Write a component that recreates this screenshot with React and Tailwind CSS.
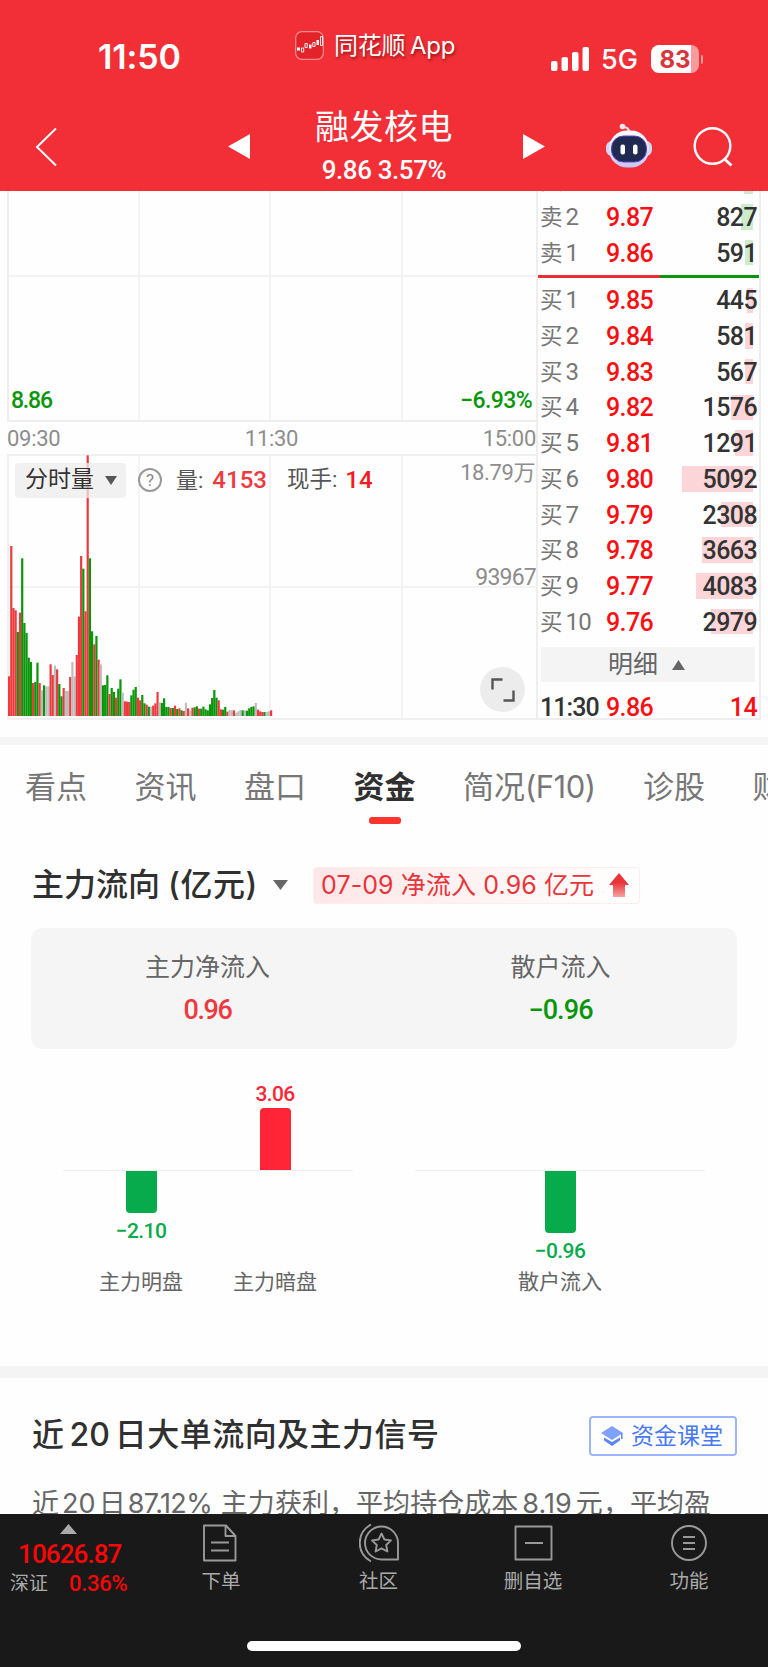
import React from 'react';

// --- Data ---
const SELLS = [
  { label: '卖', level: 3, price: '9.88', volume: 640 },
  { label: '卖', level: 2, price: '9.87', volume: 827 },
  { label: '卖', level: 1, price: '9.86', volume: 591 },
];

const BUYS = [
  { label: '买', level: 1, price: '9.85', volume: 445 },
  { label: '买', level: 2, price: '9.84', volume: 581 },
  { label: '买', level: 3, price: '9.83', volume: 567 },
  { label: '买', level: 4, price: '9.82', volume: 1576 },
  { label: '买', level: 5, price: '9.81', volume: 1291 },
  { label: '买', level: 6, price: '9.80', volume: 5092 },
  { label: '买', level: 7, price: '9.79', volume: 2308 },
  { label: '买', level: 8, price: '9.78', volume: 3663 },
  { label: '买', level: 9, price: '9.77', volume: 4083 },
  { label: '买', level: 10, price: '9.76', volume: 2979 },
];

const TABS = ['看点', '资讯', '盘口', '资金', '简况(F10)', '诊股', '财务'];

// One entry per minute: r = up, g = down, n = flat, followed by the height
const MINUTES = (
  'r119 r510 r324 r317 g252 r310 g473 g279 g249 g175 g162 r99 g102 g160 r99 n77 g92 n89 n89 r155 ' +
  'r123 n151 r140 g96 g59 r84 n75 n75 r117 n162 n119 r183 r298 r480 g442 r314 r782 g473 g254 r215 ' +
  'g240 r169 n155 g92 g93 g122 r66 g84 g72 r55 g82 g110 n70 r44 r43 r42 g62 g79 g87 r55 ' +
  'r47 g63 g38 r34 g28 n28 r31 r38 r72 n41 g39 g53 g27 g27 r24 g24 r31 g21 r23 g17 ' +
  'r15 n40 r23 n16 r25 g26 g29 r22 g22 g28 g20 g17 g35 g54 g78 g55 r47 r20 g19 g27 ' +
  'r13 n18 n17 r17 n10 n14 n18 g17 n17 g16 g23 g27 g29 n39 r19 r14 r12 g12 n12 n14 r17'
).split(' ');

const MINUTE_COLORS = { r: '#ee3a3e', g: '#0a960a', n: '#bdbdbd' };

const FLOWS = [
  [
    { name: '主力明盘', value: '−2.10', height: 42, up: false },
    { name: '主力暗盘', value: '3.06', height: 62, up: true },
  ],
  [{ name: '散户流入', value: '−0.96', height: 62, up: false }],
];

// --- Header ---
const Robot = () => (
  <svg width="48" height="46" viewBox="0 0 48 46">
    <defs>
      <linearGradient id="shell" x1="0" y1="0" x2="0" y2="1">
        <stop offset="0" stopColor="#fff" />
        <stop offset="1" stopColor="#c9c6f3" />
      </linearGradient>
    </defs>
    <path d="M24 9C24 5 22 4 18 4" fill="none" stroke="#e6e0f5" strokeWidth="2" />
    <circle cx="17.500" cy="3.500" r="2.800" fill="#f3e3ee" />
    <rect x="1" y="18" width="46" height="15" rx="6" fill="#d3d3f6" />
    <rect x="4" y="7.500" width="40" height="37" rx="18" fill="url(#shell)" />
    <rect x="6.500" y="13" width="35" height="26" rx="12" fill="#202950" stroke="#5a48c8" strokeWidth="1" />
    <rect x="15.500" y="21.500" width="4.500" height="10" rx="2" fill="#fff" />
    <rect x="28" y="21.500" width="4.500" height="10" rx="2" fill="#fff" />
  </svg>
);

const StatusBar = () => (
  <div className="flex h-[100px] items-start text-white">
    <div className="w-[295px] pl-[98px] pt-[39px] text-[34px] leading-[36px] font-semibold tracking-[-0.1px]">11:50</div>
    <div className="flex w-[256px] items-center pt-[29px]">
      <svg width="29" height="29" viewBox="0 0 29 29">
        <rect x="0.700" y="0.700" width="27.600" height="27.600" rx="6" fill="#e32329" stroke="#f58b8e" strokeWidth="1.200" />
        <path d="M2 16.500h3v3H2zM14 13.500h2.500v4H14zM21.500 9h2.500v5h-2.500z" fill="#fff" />
        <path d="M6.500 17h2.200v4H6.500zM10 12.500h2.200v4H10zM17.800 11.500H20v4h-2.200zM25.500 5.500h2v9h-2z" fill="none" stroke="#fff" strokeWidth="0.900" />
      </svg>
      <span className="mt-[2px] ml-[10px] text-[24px] leading-[30px] tracking-[-0.3px] whitespace-nowrap [text-shadow:1px_2px_3px_rgba(90,0,0,0.6)]">同花顺<span className="ml-[5px]">App</span></span>
    </div>
    <div className="flex items-center pt-[44px]">
      <svg width="38" height="24" viewBox="0 0 38 24" fill="#fff">
        <rect x="0" y="14" width="6.500" height="10" rx="2" />
        <rect x="10.500" y="10" width="6.500" height="14" rx="2" />
        <rect x="21" y="5" width="6.500" height="19" rx="2" />
        <rect x="31.500" y="0" width="6.500" height="24" rx="2" />
      </svg>
      <span className="mt-[2px] ml-[12px] w-[50px] text-[27px] leading-[28px] font-medium">5G</span>
      <div className="flex h-[28px] w-[48px] items-center justify-center rounded-[8px] bg-linear-to-r from-white from-83% to-[#f99a9d] to-83% pt-[1px] text-[24px] leading-none font-bold text-[#d9353b]">83</div>
      <div className="ml-[2px] h-[9px] w-[2px] rounded-r-full bg-[#f99a9d]" />
    </div>
  </div>
);

const TitleBar = () => (
  <div className="flex h-[91px] items-start text-white">
    <svg className="mt-[27px] ml-[35px]" width="23" height="40" viewBox="0 0 23 40">
      <path d="M21 1.500L2 20l19 18.500" fill="none" stroke="#fff" strokeWidth="2" />
    </svg>
    <svg className="mt-[34px] ml-[170px]" width="22" height="25" viewBox="0 0 22 25">
      <path d="M22 0v25L0 12.500z" fill="#fff" />
    </svg>
    <div className="flex w-[273px] flex-col items-center pr-[5px]">
      <div className="mt-[7px] text-[34px] leading-[40px] tracking-[0.5px]">融发核电</div>
      <div className="mt-[8px] font-[Roboto] text-[26px] leading-[30px] font-medium tracking-[-0.4px]">9.86 3.57%</div>
    </div>
    <svg className="mt-[34px]" width="22" height="25" viewBox="0 0 22 25">
      <path d="M0 0v25L22 12.500z" fill="#fff" />
    </svg>
    <div className="mt-[23px] ml-[60px]"><Robot /></div>
    <svg className="mt-[27px] ml-[40px]" width="41" height="41" viewBox="0 0 41 41">
      <circle cx="19.500" cy="19" r="17.800" fill="none" stroke="#fff" strokeWidth="2.400" />
      <path d="M31.500 32l7 6.500" stroke="#fff" strokeWidth="2.800" />
    </svg>
  </div>
);

// --- Intraday chart ---
const GridLines = () => (
  <div className="absolute inset-y-0 right-[2px] left-[-1px] grid grid-cols-4">
    <div className="border-r-2 border-[#f3f3f3]" />
    <div className="border-r-2 border-[#f3f3f3]" />
    <div className="border-r-2 border-[#f3f3f3]" />
    <div />
  </div>
);

const PriceChart = () => (
  <div className="relative h-[231px] border-b-2 border-l-2 border-[#eeeeee]">
    <GridLines />
    <div className="absolute top-[84px] right-0 left-0 h-[2px] bg-[#f3f3f3]" />
    <div className="absolute bottom-[5px] flex w-full justify-between pr-[4px] pl-[2px] text-[23px] leading-[28px] font-medium text-[#0a960a]">
      <span className="tracking-[-1.200px]">8.86</span>
      <span className="tracking-[-0.6px]">−6.93%</span>
    </div>
  </div>
);

const VolumeChart = () => (
  <div className="relative h-[266px] border-2 border-r-0 border-[#f0f0f0]">
    <GridLines />
    <div className="absolute top-[130px] right-0 left-0 h-[2px] bg-[#f3f3f3]" />
    <svg className="absolute bottom-[2px] left-[-1px]" width="267" height="262" viewBox="0 0 801 786">
      {MINUTES.map((m, i) => (
        <rect key={i} x={i * 6.55} y={786 - Number(m.slice(1))} width="6.600" height={m.slice(1)} fill={MINUTE_COLORS[m[0]]} />
      ))}
    </svg>
    <div className="absolute top-[6px] left-[6px] flex items-center">
      <div className="flex h-[35px] w-[111px] items-center rounded-[4px] bg-[#ececec]/75 pl-[10px] text-[23px] text-[#333]">
        分时量
        <svg className="ml-[11px]" width="12" height="9" viewBox="0 0 12 9"><path d="M0 0h12L6 9z" fill="#555" /></svg>
      </div>
      <div className="ml-[12px] flex size-[24px] items-center justify-center rounded-full border-2 border-[#999] text-[17px] leading-none text-[#888]">?</div>
      <span className="ml-[14px] text-[22px] text-[#555]">量:</span>
      <span className="ml-[9px] text-[24px] font-medium text-[#ee3a3e]">4153</span>
      <span className="ml-[20px] text-[22.500px] text-[#555]">现手:</span>
      <span className="ml-[8px] text-[24px] font-medium text-[#f51a1f]">14</span>
    </div>
    <div className="absolute top-[2px] right-[1px] text-[22px] leading-[30px] tracking-[-0.4px] text-[#8d8d8d]">18.79万</div>
    <div className="absolute top-[108px] right-0 text-[23px] leading-[28px] tracking-[-0.8px] text-[#8d8d8d]">93967</div>
    <div className="absolute right-[11px] bottom-[6px] flex size-[45px] items-center justify-center rounded-full bg-[#ececec]">
      <svg width="24" height="24" viewBox="0 0 24 24" fill="none" stroke="#555" strokeWidth="2.400">
        <path d="M1.500 11.500v-10h10M22.500 12.500v10h-10" />
      </svg>
    </div>
  </div>
);

// --- Order book ---
const OrderRow = ({ label, level, price, volume }) => (
  <div className="relative flex h-[35.700px] shrink-0 items-center pt-[1px] pr-[2px] pl-[2px] leading-[35px]">
    <div
      className={`absolute top-[5px] right-[6px] h-[25.500px] ${label === '卖' ? 'bg-[#cdebcd]' : 'bg-[#fbd5d7]'}`}
      style={{ width: volume * 0.01394 }}
    />
    <span className="relative w-[66px] text-[22.500px] text-[#777]">{label}<span className="ml-[3px] text-[24px] tracking-[-0.8px]">{level}</span></span>
    <span className="relative text-[25px] font-medium tracking-[-0.6px] text-[#fb0f13]">{price}</span>
    <span className="relative ml-auto text-[25px] font-medium tracking-[-0.6px] text-[#333]">{volume}</span>
  </div>
);

const OrderBook = () => (
  <div className="flex h-[529px] w-[225px] flex-col overflow-hidden border-r-2 border-b-2 border-l-2 border-[#eeeeee] font-[Roboto,'Noto_Sans_CJK_SC',sans-serif]">
    <div className="mt-[-27.500px] shrink-0">
      {SELLS.map(row => <OrderRow key={row.level} {...row} />)}
    </div>
    <div className="mt-[4px] mb-[5px] flex h-[3px] shrink-0">
      <div className="w-[122px] bg-[#ea2f33]" />
      <div className="flex-1 bg-[#0a960a]" />
    </div>
    {BUYS.map(row => <OrderRow key={row.level} {...row} />)}
    <div className="mr-[4px] ml-[3px] mt-[8px] flex h-[35px] shrink-0 items-center justify-center bg-[#f4f4f4] pr-[3px] text-[25px] leading-none text-[#666]">
      明细
      <svg className="ml-[14px]" width="13" height="10" viewBox="0 0 13 10"><path d="M6.500 0L13 10H0z" fill="#666" /></svg>
    </div>
    <div className="mt-[7px] flex h-[35px] shrink-0 items-center pt-[2px] pr-[2px] pl-[2px] text-[25px] leading-[35px] font-medium tracking-[-0.6px]">
      <span className="w-[66px] tracking-[-0.9px] text-[#333]">11:30</span>
      <span className="text-[#fb0f13]">9.86</span>
      <span className="ml-auto text-[#fb0f13]">14</span>
    </div>
  </div>
);

// --- Capital flow ---
const FlowLabel = ({ item }) => (
  <span className={`font-[Roboto] text-[21px] leading-[24px] font-medium tracking-[-0.6px] ${item.up ? 'text-[#ff2436]' : 'text-[#07ab4b]'}`}>{item.value}</span>
);

const FlowPanel = ({ items }) => (
  <div className="w-[290px]">
    <div className="flex h-[121px] items-end justify-center">
      {items.map(item => (
        <div key={item.name} className="flex w-[134px] flex-col items-center">
          {item.up && <FlowLabel item={item} />}
          {item.up && <div className="mt-[2px] w-[31px] rounded-t-[4px] bg-[#ff2436]" style={{ height: item.height }} />}
        </div>
      ))}
    </div>
    <div className="h-[1px] bg-[#eeeeee]" />
    <div className="flex h-[97px] items-start justify-center">
      {items.map(item => (
        <div key={item.name} className="flex w-[134px] flex-col items-center">
          {!item.up && <div className="mb-[6px] w-[31px] rounded-b-[4px] bg-[#07ab4b]" style={{ height: item.height }} />}
          {!item.up && <FlowLabel item={item} />}
        </div>
      ))}
    </div>
    <div className="flex justify-center">
      {items.map(item => (
        <span key={item.name} className="w-[134px] text-center text-[21px] leading-[28px] text-[#666]">{item.name}</span>
      ))}
    </div>
  </div>
);

const CapitalFlow = () => (
  <section className="h-[534px] pt-[33px]">
    <div className="flex h-[40px] items-center pl-[32px]">
      <h2 className="text-[32px] leading-[40px] font-medium whitespace-nowrap text-[#303030]">主力流向<span className="ml-[8px] tracking-[0.6px]">(亿元)</span></h2>
      <svg className="ml-[15px]" width="15" height="10" viewBox="0 0 15 10"><path d="M0 0h15L7.500 10z" fill="#666" /></svg>
      <div className="ml-[25px] flex h-[37px] w-[327px] items-center rounded-[3px] border border-[#fdeeee] bg-linear-to-r from-[#fde7e8] to-white pl-[7px] text-[25px] leading-none tracking-[0.1px] whitespace-nowrap text-[#e93439]">
        07-09 净流入 0.96 亿元
        <svg className="ml-[15px]" width="20" height="24" viewBox="0 0 20 24">
          <defs>
            <linearGradient id="rise" x1="0" y1="0" x2="0" y2="1">
              <stop offset="0.400" stopColor="#e93439" />
              <stop offset="1" stopColor="#f5a3a5" />
            </linearGradient>
          </defs>
          <path d="M10 0l10 12h-4v12H4V12H0z" fill="url(#rise)" />
        </svg>
      </div>
    </div>
    <div className="mx-[31px] mt-[23px] flex h-[121px] rounded-[12px] bg-[#f5f5f5] text-center">
      <div className="flex-1 pt-[21px]">
        <div className="text-[25px] leading-[36px] text-[#666]">主力净流入</div>
        <div className="mt-[8px] font-[Roboto] text-[27px] leading-[34px] font-medium tracking-[-1.400px] text-[#ee3a3e]">0.96</div>
      </div>
      <div className="flex-1 pt-[21px]">
        <div className="text-[25px] leading-[36px] text-[#666]">散户流入</div>
        <div className="mt-[8px] font-[Roboto] text-[27px] leading-[34px] font-medium tracking-[-0.9px] text-[#0a960a]">−0.96</div>
      </div>
    </div>
    <div className="flex gap-[62px] pl-[63px]">
      {FLOWS.map((items, i) => <FlowPanel key={i} items={items} />)}
    </div>
  </section>
);

// --- 20 day signal ---
const Signals = () => (
  <section className="h-[136px] overflow-hidden pt-[36px] pl-[32px]">
    <div className="flex h-[44px] items-center justify-between pr-[31px]">
      <h2 className="mt-[-2px] text-[32px] leading-[40px] font-medium tracking-[0.45px] whitespace-nowrap text-[#303030]">近<span className="mx-[5px] tracking-normal">20</span>日大单流向及主力信号</h2>
      <button className="flex h-[40px] w-[148px] items-center rounded-[4px] border-2 border-[#9db6fb] pl-[10px] text-[23px] leading-none text-[#4878f5]">
        <svg className="mr-[8px]" width="22" height="20" viewBox="0 0 22 20">
          <path d="M11 0l11 7-11 7L0 7z" fill="#7ea2fa" />
          <path d="M3 11.500l8 4.500 8-4.500v3L11 20l-8-5.500zM20 7h1.500v6H20z" fill="#5b87f6" />
        </svg>
        资金课堂
      </button>
    </div>
    <p className="mt-[29px] text-[27px] leading-[34px] tracking-[0.05px] whitespace-nowrap text-[#666]">
      近<span className="mx-[3px]">20</span>日<span className="mr-[1px] ml-[2px] tracking-[-0.6px]">87.12%</span> 主力获利，平均持仓成本<span className="mx-[4px]">8.19</span>元，平均盈
    </p>
  </section>
);

// --- Bottom bar ---
const NAV_ITEMS = [
  {
    label: '下单',
    className: 'w-[142px]',
    icon: <path d="M3 2.500h22l9.500 10.500V37.500H3zM24.500 2.500v10.500h10M10 19.500h18M10 27.500h18" />,
  },
  {
    label: '社区',
    className: 'w-[173px]',
    icon: (
      <>
        <path d="M12 1.500C-3 10-3 30 12 38.500M22.500 36.500A16.500 16.500 0 1 1 39 20V36.500z" />
        <path d="M22.500 10.500l2.900 6 6.600.9-4.800 4.600 1.200 6.500-5.900-3.200-5.900 3.200 1.200-6.500-4.800-4.600 6.600-.9z" />
      </>
    ),
  },
  {
    label: '删自选',
    className: 'w-[136px]',
    icon: <path d="M2.500 3.500h36v33h-36zM12 20h18" />,
  },
  {
    label: '功能',
    className: 'w-[167px] pl-[9px]',
    icon: <path d="M20 3a17 17 0 1 0 0 34 17 17 0 0 0 0-34zM14 14h12M14 20h12M14 26h12" />,
  },
];

const BottomBar = () => (
  <footer className="flex h-[153px] flex-col items-center bg-[#191919]">
    <div className="flex h-[127px] w-full">
      <div className="w-[150px] pt-[10px]">
        <svg className="ml-[60px]" width="17" height="10" viewBox="0 0 17 10"><path d="M8.500 0L17 10H0z" fill="#aaa" /></svg>
        <div className="mt-[5px] pl-[18px] font-[Roboto] text-[26px] leading-[30px] font-medium tracking-[-0.9px] text-[#fb0507]">10626.87</div>
        <div className="flex items-center pl-[10px] leading-[30px]">
          <span className="w-[59px] text-[19px] text-[#aaa]">深证</span>
          <span className="font-[Roboto] text-[22px] font-medium tracking-[-0.3px] text-[#fb0507]">0.36%</span>
        </div>
      </div>
      {NAV_ITEMS.map(item => (
        <div key={item.label} className={`flex flex-col items-center pt-[9px] ${item.className}`}>
          <svg width="40" height="40" viewBox="0 0 40 40" fill="none" stroke="#999" strokeWidth="1.900" strokeLinejoin="round">{item.icon}</svg>
          <span className="mt-[4px] text-[19.500px] leading-[28px] text-[#aaa]">{item.label}</span>
        </div>
      ))}
    </div>
    <div className="h-[10px] w-[274px] rounded-full bg-white" />
  </footer>
);

export default function App() {
  return (
    <div className="h-[1667px] w-[768px] overflow-hidden bg-[#fefefe] font-[Inter,'Noto_Sans_CJK_SC',sans-serif]">
      <header className="h-[191px] bg-[#f22f37]">
        <StatusBar />
        <TitleBar />
      </header>

      <div className="flex h-[546px] pl-[7px]">
        <div className="w-[529px] font-[Roboto,'Noto_Sans_CJK_SC',sans-serif]">
          <PriceChart />
          <div className="flex h-[32px] items-center justify-between text-[22px] tracking-[-0.3px] text-[#8d8d8d]">
            <span>09:30</span>
            <span>11:30</span>
            <span>15:00</span>
          </div>
          <VolumeChart />
        </div>
        <OrderBook />
      </div>

      <div className="h-[8px] bg-[#f5f5f5]" />

      <nav className="flex h-[87px] gap-[47.500px] overflow-hidden pt-[22px] pl-[25px] text-[31px] leading-[40px] whitespace-nowrap text-[#777]">
        {TABS.map(tab => (
          <div key={tab} className={`flex shrink-0 flex-col items-center ${tab === '资金' ? 'font-bold text-[#303030]' : ''}`}>
            {tab === '简况(F10)' ? <span>简况<span className="tracking-[-0.5px]">(F10)</span></span> : tab}
            {tab === '资金' && <div className="mt-[10px] h-[7px] w-[32px] rounded-[3px] bg-[#ff352e]" />}
          </div>
        ))}
      </nav>

      <CapitalFlow />
      <div className="h-[12px] bg-[#f4f4f4]" />
      <Signals />
      <BottomBar />
    </div>
  );
}
